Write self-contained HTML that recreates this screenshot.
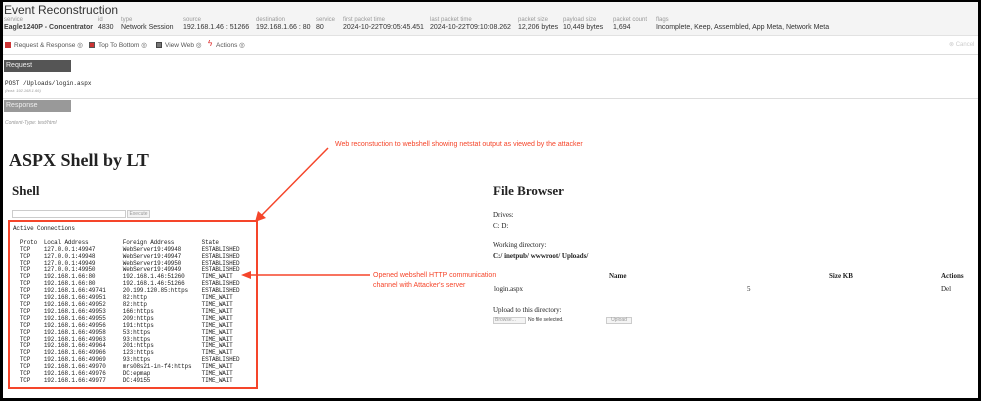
<!DOCTYPE html>
<html><head><meta charset="utf-8"><style>
*{margin:0;padding:0;box-sizing:border-box}
body{width:981px;height:401px;position:relative;background:#000;overflow:hidden;font-family:"Liberation Sans",sans-serif}
#pg{position:absolute;left:3px;top:2px;width:975px;height:396px;background:#fff;overflow:hidden}
.a{position:absolute;white-space:nowrap}
.lbl{font-size:6px;color:#999}
.val{font-size:7px;color:#333}
.mono{font-family:"Liberation Mono",monospace;font-size:6px;color:#222}
.serif{font-family:"Liberation Serif",serif;color:#222}
.red{color:#f5452a;font-size:7px}
.tb{font-size:6.5px;color:#555}
</style></head><body><div id="pg">
<div class="a" style="left:0;top:0;width:975px;height:34px;background:#f4f4f4;border-bottom:1px solid #e2e2e2"></div>
<div class="a" style="left:1px;top:1px;font-size:12px;color:#333">Event Reconstruction</div>
<div class="a lbl" style="left:1px;top:15px">service</div><div class="a val" style="left:1px;top:22px;font-weight:bold;color:#444">Eagle1240P - Concentrator</div>
<div class="a lbl" style="left:95px;top:15px">id</div><div class="a val" style="left:95px;top:22px">4830</div>
<div class="a lbl" style="left:118px;top:15px">type</div><div class="a val" style="left:118px;top:22px">Network Session</div>
<div class="a lbl" style="left:180px;top:15px">source</div><div class="a val" style="left:180px;top:22px">192.168.1.46 : 51266</div>
<div class="a lbl" style="left:253px;top:15px">destination</div><div class="a val" style="left:253px;top:22px">192.168.1.66 : 80</div>
<div class="a lbl" style="left:313px;top:15px">service</div><div class="a val" style="left:313px;top:22px">80</div>
<div class="a lbl" style="left:340px;top:15px">first packet time</div><div class="a val" style="left:340px;top:22px">2024-10-22T09:05:45.451</div>
<div class="a lbl" style="left:427px;top:15px">last packet time</div><div class="a val" style="left:427px;top:22px">2024-10-22T09:10:08.262</div>
<div class="a lbl" style="left:515px;top:15px">packet size</div><div class="a val" style="left:515px;top:22px">12,206 bytes</div>
<div class="a lbl" style="left:560px;top:15px">payload size</div><div class="a val" style="left:560px;top:22px">10,449 bytes</div>
<div class="a lbl" style="left:610px;top:15px">packet count</div><div class="a val" style="left:610px;top:22px">1,694</div>
<div class="a lbl" style="left:653px;top:15px">flags</div><div class="a val" style="left:653px;top:22px">Incomplete, Keep, Assembled, App Meta, Network Meta</div>
<div class="a" style="left:0;top:52px;width:975px;height:1px;background:#ddd"></div>
<div class="a" style="left:2px;top:40px;width:6px;height:6px;background:#c33"></div>
<div class="a tb" style="left:11px;top:39px">Request &amp; Response ◎</div>
<div class="a" style="left:86px;top:40px;width:6px;height:6px;background:#c33;border:1px solid #555"></div>
<div class="a tb" style="left:95px;top:39px">Top To Bottom ◎</div>
<div class="a" style="left:153px;top:40px;width:6px;height:6px;background:#777;border:1px solid #444"></div>
<div class="a tb" style="left:162px;top:39px">View Web ◎</div>
<div class="a" style="left:205px;top:37px;font-size:8px;color:#d22">ϟ</div>
<div class="a tb" style="left:213px;top:39px">Actions ◎</div>
<div class="a" style="left:946px;top:39px;font-size:6px;color:#ccc">⊗ Cancel</div>
<div class="a" style="left:1px;top:58px;width:67px;height:12px;background:#555;color:#eee;font-size:7px;padding:2px 2px">Request</div>
<div class="a mono" style="left:2px;top:78px">POST /Uploads/login.aspx</div>
<div class="a" style="left:2px;top:86px;font-size:4px;color:#999;font-style:italic">(host: 192.168.1.66)</div>
<div class="a" style="left:0;top:96px;width:975px;height:1px;background:#ddd"></div>
<div class="a" style="left:1px;top:98px;width:67px;height:12px;background:#999;color:#eee;font-size:7px;padding:2px 2px">Response</div>
<div class="a" style="left:2px;top:118px;font-size:5px;color:#999;font-style:italic">Content-Type: text/html</div>
<div class="a serif" style="left:6px;top:148px;font-size:18px;font-weight:bold">ASPX Shell by LT</div>
<div class="a serif" style="left:9px;top:181px;font-size:13px;font-weight:bold">Shell</div>
<div class="a" style="left:9px;top:208px;width:114px;height:8px;border:1px solid #ccc"></div>
<div class="a" style="left:124px;top:208px;width:23px;height:8px;border:1px solid #ccc;background:#f4f4f4;font-size:5px;color:#999;text-align:center;line-height:7px">Execute</div>
<div class="a" style="left:5px;top:218px;width:250px;height:169px;border:2px solid #f5452a"></div>
<pre class="a mono" style="left:10px;top:224px;line-height:6.9px;white-space:pre;letter-spacing:-0.17px">Active Connections

  Proto  Local Address          Foreign Address        State
  TCP    127.0.0.1:49947        WebServer19:49948      ESTABLISHED
  TCP    127.0.0.1:49948        WebServer19:49947      ESTABLISHED
  TCP    127.0.0.1:49949        WebServer19:49950      ESTABLISHED
  TCP    127.0.0.1:49950        WebServer19:49949      ESTABLISHED
  TCP    192.168.1.66:80        192.168.1.46:51260     TIME_WAIT
  TCP    192.168.1.66:80        192.168.1.46:51266     ESTABLISHED
  TCP    192.168.1.66:49741     20.199.120.85:https    ESTABLISHED
  TCP    192.168.1.66:49951     82:http                TIME_WAIT
  TCP    192.168.1.66:49952     82:http                TIME_WAIT
  TCP    192.168.1.66:49953     166:https              TIME_WAIT
  TCP    192.168.1.66:49955     209:https              TIME_WAIT
  TCP    192.168.1.66:49956     191:https              TIME_WAIT
  TCP    192.168.1.66:49958     53:https               TIME_WAIT
  TCP    192.168.1.66:49963     93:https               TIME_WAIT
  TCP    192.168.1.66:49964     201:https              TIME_WAIT
  TCP    192.168.1.66:49966     123:https              TIME_WAIT
  TCP    192.168.1.66:49969     93:https               ESTABLISHED
  TCP    192.168.1.66:49970     mrs08s21-in-f4:https   TIME_WAIT
  TCP    192.168.1.66:49976     DC:epmap               TIME_WAIT
  TCP    192.168.1.66:49977     DC:49155               TIME_WAIT</pre>
<svg class="a" style="left:0;top:0" width="975" height="396">
<line x1="325" y1="146" x2="258" y2="214" stroke="#f5452a" stroke-width="1.5"/>
<polygon points="252,220 255,209 263,216" fill="#f5452a"/>
<line x1="367" y1="273" x2="246" y2="273" stroke="#f5452a" stroke-width="1.5"/>
<polygon points="238,273 248,269 248,277" fill="#f5452a"/>
</svg>
<div class="a red" style="left:332px;top:139px">Web reconstuction to webshell showing netstat output as viewed by the attacker</div>
<div class="a red" style="left:370px;top:270px">Opened webshell HTTP communication</div>
<div class="a red" style="left:370px;top:280px">channel with Attacker's server</div>
<div class="a serif" style="left:490px;top:181px;font-size:13px;font-weight:bold">File Browser</div>
<div class="a serif" style="left:490px;top:209px;font-size:7px">Drives:</div>
<div class="a serif" style="left:490px;top:220px;font-size:7px">C: D:</div>
<div class="a serif" style="left:490px;top:239px;font-size:7px">Working directory:</div>
<div class="a serif" style="left:490px;top:250px;font-size:7px;font-weight:bold">C:/ inetpub/ wwwroot/ Uploads/</div>
<div class="a serif" style="left:606px;top:270px;font-size:7px;font-weight:bold">Name</div>
<div class="a serif" style="left:826px;top:270px;font-size:7px;font-weight:bold">Size KB</div>
<div class="a serif" style="left:938px;top:270px;font-size:7px;font-weight:bold">Actions</div>
<div class="a serif" style="left:491px;top:283px;font-size:7px">login.aspx</div>
<div class="a serif" style="left:744px;top:283px;font-size:7px">5</div>
<div class="a serif" style="left:938px;top:283px;font-size:7px">Del</div>
<div class="a serif" style="left:490px;top:304px;font-size:7px">Upload to this directory:</div>
<div class="a" style="left:490px;top:315px;width:33px;height:7px;border:1px solid #ccc;background:#f4f4f4;font-size:5px;color:#999;line-height:5px;padding-left:1px">Browse...</div>
<div class="a" style="left:525px;top:315px;font-size:5px;color:#333">No file selected.</div>
<div class="a" style="left:603px;top:315px;width:26px;height:7px;border:1px solid #ccc;background:#f4f4f4;font-size:5px;color:#999;line-height:5px;text-align:center">Upload</div>
</div></body></html>
